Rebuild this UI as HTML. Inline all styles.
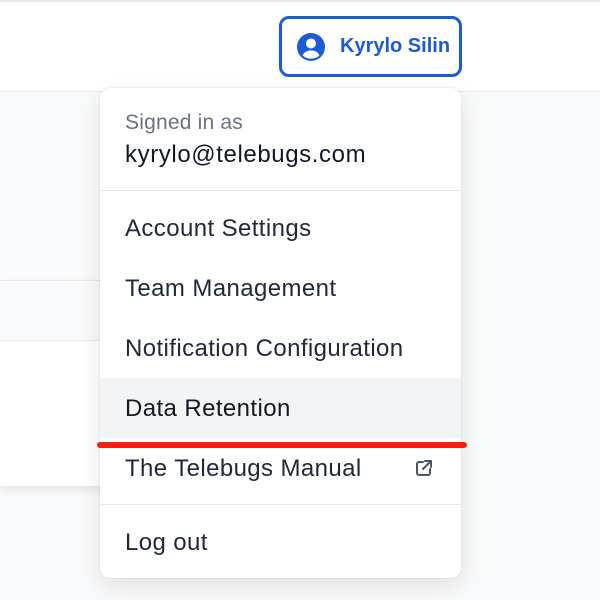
<!DOCTYPE html>
<html><head><style>
*{margin:0;padding:0;box-sizing:border-box}
body{width:600px;height:600px;overflow:hidden;background:#f9fafb;font-family:"Liberation Sans",Arial,sans-serif;position:relative}
.hdr{position:absolute;left:0;top:0;width:600px;height:92px;background:#fff;border-top:2px solid #e5e7eb;border-bottom:1px solid #e5e7eb}
.btn{position:absolute;left:279px;top:16px;width:183px;height:61px;border:3px solid #1d5bd6;border-radius:10px;background:#fff}
.btn span{position:absolute;left:58px;top:16px;font-size:20px;font-weight:bold;color:#1d5bd6}
.leftcard{position:absolute;left:0;top:280px;width:110px;height:206px;background:#fff;border-top:1px solid #e5e7eb;box-shadow:0 4px 8px rgba(0,0,0,.08)}
.leftcard .g{height:60px;background:#f9fafb;border-bottom:1px solid #e5e7eb}
.dd{position:absolute;left:100px;top:88px;width:361px;height:490px;background:#fff;border-radius:10px;box-shadow:0 8px 24px rgba(0,0,0,.1),0 0 0 1px rgba(0,0,0,.04);overflow:hidden}
.t{position:absolute;left:25px;font-size:24px;letter-spacing:0.4px;color:#1f2937;line-height:28px;white-space:nowrap}
.div{position:absolute;left:0;width:361px;height:1px;background:#e5e7eb}
</style></head><body>
<div class="hdr"></div>
<div class="btn">
<svg style="position:absolute;left:15px;top:14px" width="28" height="28" viewBox="0 0 28 28"><circle cx="14" cy="14" r="14" fill="#1d5bd6"/><circle cx="14" cy="10.5" r="5" fill="#fff"/><path d="M5.5 22.5C7.5 18.5 10.5 17.5 14 17.5S20.5 18.5 22.5 22.5A13 13 0 0 1 5.5 22.5Z" fill="#fff"/></svg>
<span>Kyrylo Silin</span></div>
<div class="leftcard"><div class="g"></div></div>
<div class="dd">
<div class="t" style="top:21px;font-size:21px;letter-spacing:0.2px;color:#6b7280">Signed in as</div>
<div class="t" style="top:53px;font-size:24px;letter-spacing:0.6px;color:#111827">kyrylo@telebugs.com</div>
<div class="div" style="top:102px"></div>
<div class="t" style="top:127px">Account Settings</div>
<div class="t" style="top:187px">Team Management</div>
<div class="t" style="top:247px">Notification Configuration</div>
<div style="position:absolute;left:0;top:290px;width:361px;height:60px;background:#f3f4f6"></div>
<div class="t" style="top:307px;color:#111827">Data Retention</div>
<div class="t" style="top:367px">The Telebugs Manual</div>
<svg style="position:absolute;left:314px;top:370px" width="20" height="20" viewBox="0 0 20 20" fill="none" stroke="#4b5563" stroke-width="2" stroke-linecap="round" stroke-linejoin="round"><path d="M9 4H5a2 2 0 0 0-2 2v9a2 2 0 0 0 2 2h9a2 2 0 0 0 2-2v-4"/><path d="M11 3h6v6"/><path d="M17 3l-8 8"/></svg>
<div class="div" style="top:416px"></div>
<div class="t" style="top:441px">Log out</div>
</div>
<div style="position:absolute;left:97px;top:442px;width:370px;height:6px;background:#f0200e;border-radius:3px"></div>
</body></html>
